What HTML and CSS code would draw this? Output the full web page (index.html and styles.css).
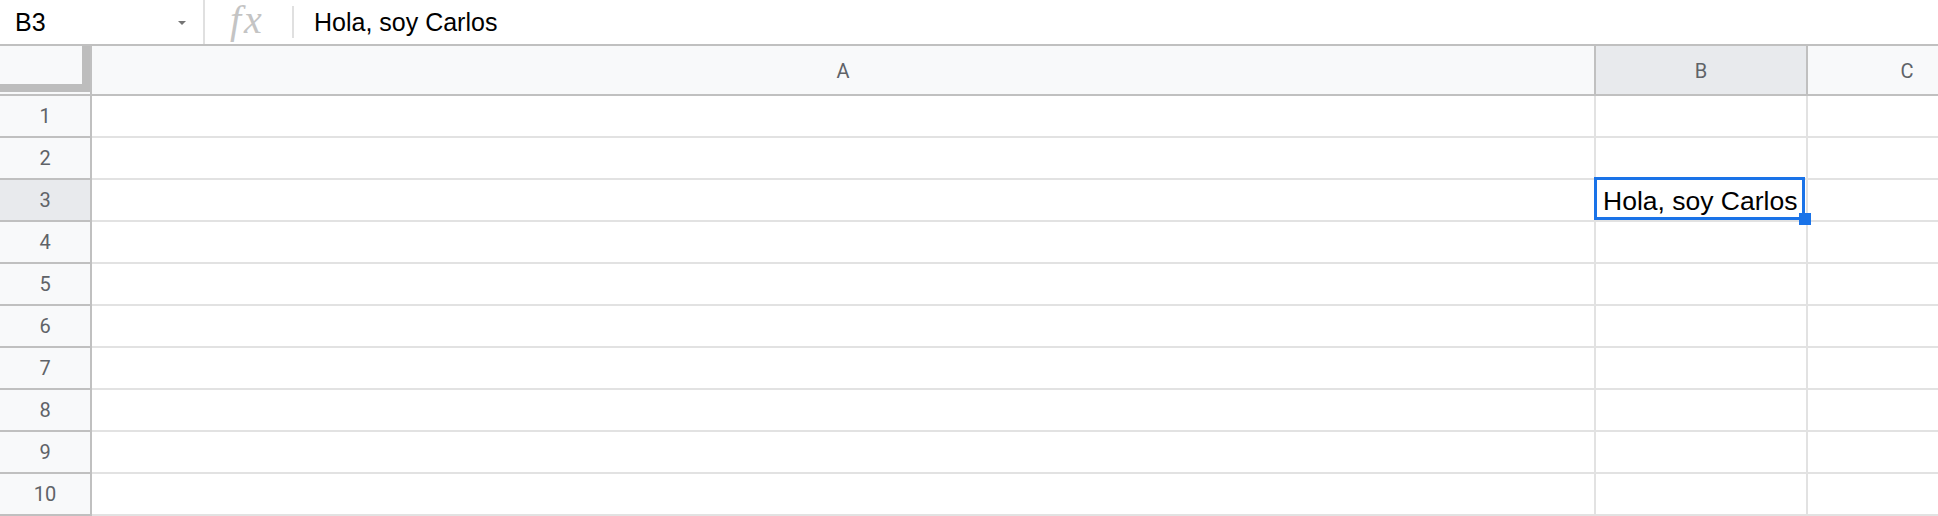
FILE: index.html
```html
<!DOCTYPE html>
<html lang="es">
<head>
    <meta charset="UTF-8">
    <meta name="viewport" content="width=device-width, initial-scale=1.0">
    <title>Hoja de cálculo</title>
    <link rel="stylesheet" href="styles.css">
</head>
<body>
    <div class="formula-bar">
        <div class="name-box">
            <span class="name">B3</span>
            <span class="caret"></span>
        </div>
        <div class="fx-box">
            <span class="fx">fx</span>
        </div>
        <div class="formula-input">Hola, soy Carlos</div>
    </div>

    <div class="sheet">
        <div class="corner"><div class="freeze"></div></div>
        <div class="col-head">A</div>
        <div class="col-head active">B</div>
        <div class="col-head">C</div>

        <div class="row-head">1</div><div class="cell"></div><div class="cell"></div><div class="cell"></div>
        <div class="row-head">2</div><div class="cell"></div><div class="cell"></div><div class="cell"></div>
        <div class="row-head active">3</div><div class="cell"></div>
        <div class="cell selected">Hola, soy Carlos<span class="handle"></span></div><div class="cell"></div>
        <div class="row-head">4</div><div class="cell"></div><div class="cell"></div><div class="cell"></div>
        <div class="row-head">5</div><div class="cell"></div><div class="cell"></div><div class="cell"></div>
        <div class="row-head">6</div><div class="cell"></div><div class="cell"></div><div class="cell"></div>
        <div class="row-head">7</div><div class="cell"></div><div class="cell"></div><div class="cell"></div>
        <div class="row-head">8</div><div class="cell"></div><div class="cell"></div><div class="cell"></div>
        <div class="row-head">9</div><div class="cell"></div><div class="cell"></div><div class="cell"></div>
        <div class="row-head">10</div><div class="cell"></div><div class="cell"></div><div class="cell"></div>
    </div>
</body>
</html>
```

FILE: styles.css
```css
/* Basic Reset */
* {
    margin: 0;
    padding: 0;
    box-sizing: border-box;
}
body {
    font-family: 'Liberation Sans', Arial, sans-serif;
    background: #ffffff;
    color: #000;
    overflow: hidden;
}

/* Formula bar */
.formula-bar {
    display: flex;
    align-items: center;
    height: 46px;
    border-bottom: 2px solid #c0c0c0;
}
.name-box {
    display: flex;
    align-items: center;
    justify-content: space-between;
    width: 205px;
    height: 100%;
    padding: 0 17px 0 15px;
    border-right: 2px solid #e0e0e0;
    font-size: 25px;
}
.caret {
    width: 0;
    height: 0;
    border-left: 4px solid transparent;
    border-right: 4px solid transparent;
    border-top: 4px solid #757575;
    margin-top: 1px;
}
.fx-box {
    display: flex;
    align-items: center;
    width: 89px;
    height: 32px;
    padding-left: 25px;
    border-right: 2px solid #e0e0e0;
}
.fx {
    font-family: 'Liberation Serif', 'Times New Roman', serif;
    font-style: italic;
    font-size: 40px;
    letter-spacing: 3px;
    color: #c4c4c4;
    line-height: 1;
    margin-top: -4px;
}
.formula-input {
    padding-left: 20px;
    font-size: 25px;
}

/* Grid */
.sheet {
    display: grid;
    grid-template-columns: 92px 1504px 212px 200px;
    grid-template-rows: 50px repeat(10, 42px);
}
.corner {
    background: #f8f9fa;
    border-right: 2px solid #c0c0c0;
    border-bottom: 2px solid #c0c0c0;
}
.freeze {
    width: 90px;
    height: 46px;
    border-right: 8px solid #bdbdbd;
    border-bottom: 8px solid #bdbdbd;
}
.col-head,
.row-head {
    display: flex;
    align-items: center;
    justify-content: center;
    background: #f8f9fa;
    color: #5f6368;
    font-family: Roboto, 'Liberation Sans', sans-serif;
    font-size: 20px;
    border-right: 2px solid #c0c0c0;
    border-bottom: 2px solid #c0c0c0;
}
.col-head {
    padding-top: 2px;
}
.col-head.active,
.row-head.active {
    background: #e8eaed;
}
.cell {
    border-right: 2px solid #e2e2e2;
    border-bottom: 2px solid #e2e2e2;
}
.cell.selected {
    position: relative;
    display: flex;
    align-items: flex-end;
    padding: 0 0 4px 7px;
    font-size: 26.5px;
    line-height: 30px;
    white-space: nowrap;
}
.cell.selected::after {
    content: "";
    position: absolute;
    top: -3px;
    left: -2px;
    right: 1px;
    bottom: 0;
    border: 3px solid #1a73e8;
}
.handle {
    position: absolute;
    right: -5px;
    bottom: -5px;
    width: 12px;
    height: 12px;
    background: #1a73e8;
    z-index: 1;
}
```
